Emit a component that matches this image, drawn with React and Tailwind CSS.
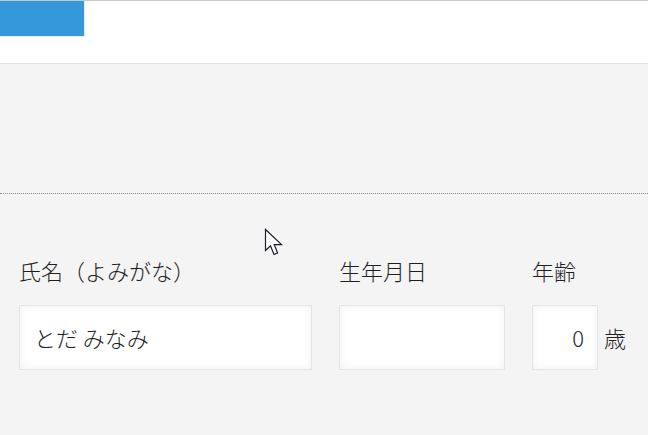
import React from 'react'

const Field = ({ label, className, children }) => (
    <div className={`flex flex-col ${className}`}>
        <p className='text-[22px] leading-[30px] text-[#1f1f1f] h-[30px] whitespace-nowrap'>{label}</p>
        <div className="mt-[20px] flex items-center">{children}</div>
    </div>
)

const boxCls = 'h-[65px] bg-white border border-[#e4e4e4] shadow-[inset_0_0_8px_rgba(0,0,0,0.06)] flex items-center text-[22px] text-[#1f1f1f]'

const App = () => {
    return (
        <div className="relative w-[648px] h-[435px] overflow-hidden bg-[#f4f4f4] font-['Noto_Sans_CJK_JP',sans-serif] font-light">
            <div className="h-[64px] bg-white border-t border-[#c9c9c9] border-b border-b-[#e3e3e3]">
                <div className="w-[85px] h-[36px] bg-[#3498db] border-r border-b border-[#e6eef5]"></div>
            </div>
            <div className="h-[130px] border-b border-dotted border-[#8a8a8a]"></div>
            <div className="flex pt-[61px] pl-[19px] gap-[27px]">
                <Field label="氏名（よみがな）" className="w-[293px]">
                    <div className={`${boxCls} w-[293px] pl-[14px]`}>とだ みなみ</div>
                </Field>
                <Field label="生年月日" className="w-[166px]">
                    <div className={`${boxCls} w-[166px]`}></div>
                </Field>
                <Field label="年齢" className="">
                    <div className={`${boxCls} w-[66px] justify-end pr-[13px]`}>0</div>
                    <span className='ml-[6px] text-[22px] text-[#1f1f1f]'>歳</span>
                </Field>
            </div>
            <svg className="absolute left-[264px] top-[228px]" width="20" height="29" viewBox="0 0 20 29">
                <path d="M1.5 1.5 L1.5 22.5 L6.5 17.8 L10 26.5 L13.6 25 L10.2 16.6 L17.5 16.6 Z" fill="#fff" stroke="#1e1e2a" strokeWidth="1.2" strokeLinejoin="miter" />
            </svg>
        </div>
    )
}

export default App
